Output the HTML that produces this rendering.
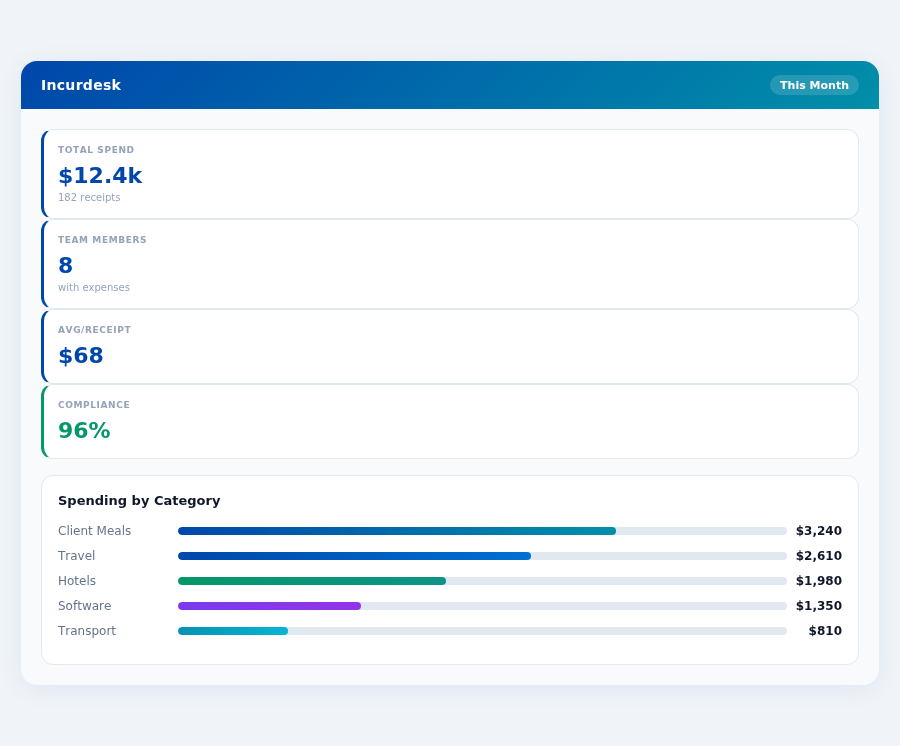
<!DOCTYPE html>
<html lang="en">
<head>
<meta charset="utf-8">
<title>Incurdesk</title>
<style>
*{box-sizing:border-box;margin:0;padding:0}
html,body{width:900px;height:746px;overflow:hidden}
body{background:#f0f4f8;font-family:"DejaVu Sans","Liberation Sans",sans-serif;color:#0f172a;font-kerning:none}
.app{position:absolute;left:21px;top:61px;width:858px;height:624px;background:#f8fafc;border-radius:16px;overflow:hidden;box-shadow:0 4px 24px rgba(0,71,171,0.08);will-change:transform}
.hdr{height:48px;background:linear-gradient(135deg,#0047ab 0%,#008fa9 100%);display:flex;align-items:center;justify-content:space-between;padding:0 20px;color:#fff}
.hdr h1{font-size:14px;font-weight:700;letter-spacing:0.3px}
.pill{font-size:11px;font-weight:700;background:rgba(255,255,255,0.15);border-radius:10px;height:20px;line-height:22px;padding:0 10px;overflow:hidden}
.body{padding:20px}
.stat{background:#fff;border:1px solid #e2e8f0;border-left:3px solid #0047ab;border-radius:12px;padding:14px 14px 0 14px;margin-bottom:0}
.stat.s1{height:90px}
.stat.s2{height:75px}
.stat.g{border-left-color:#059669}
.lab{font-size:9px;font-weight:700;letter-spacing:0.6px;color:#94a3b8;text-transform:uppercase;line-height:12px}
.val{font-size:22px;font-weight:700;color:#0047ab;line-height:28px;margin-top:6px}
.g .val{color:#059669}
.sub{font-size:10px;color:#94a3b8;line-height:12px;margin-top:2px}
.panel{margin-top:16px;background:#fff;border:1px solid #e2e8f0;border-radius:12px;height:190px;padding:17px 16px 16px}
.panel h2{font-size:13px;font-weight:700;line-height:16px;margin-bottom:9px}
.row{display:flex;align-items:center;height:25px;font-size:12px}
.row .n{width:120px;color:#64748b}
.row .t{flex:1;height:8px;border-radius:4px;background:#e2e8f0;overflow:hidden}
.row .t i{display:block;height:8px;border-radius:4px}
.row .v{width:55px;text-align:right;font-weight:700;color:#0f172a}
</style>
</head>
<body>
<div class="app">
  <div class="hdr"><h1>Incurdesk</h1><span class="pill">This Month</span></div>
  <div class="body">
    <div class="stat s1"><div class="lab">Total Spend</div><div class="val">$12.4k</div><div class="sub">182 receipts</div></div>
    <div class="stat s1"><div class="lab">Team Members</div><div class="val">8</div><div class="sub">with expenses</div></div>
    <div class="stat s2"><div class="lab">Avg/Receipt</div><div class="val">$68</div></div>
    <div class="stat s2 g"><div class="lab">Compliance</div><div class="val">96%</div></div>
    <div class="panel">
      <h2>Spending by Category</h2>
      <div class="row"><span class="n">Client Meals</span><span class="t"><i style="width:72%;background:linear-gradient(90deg,#0047ab,#008fa9)"></i></span><span class="v">$3,240</span></div>
      <div class="row"><span class="n">Travel</span><span class="t"><i style="width:58%;background:linear-gradient(90deg,#0047ab,#0070d2)"></i></span><span class="v">$2,610</span></div>
      <div class="row"><span class="n">Hotels</span><span class="t"><i style="width:44%;background:linear-gradient(90deg,#059669,#0d9488)"></i></span><span class="v">$1,980</span></div>
      <div class="row"><span class="n">Software</span><span class="t"><i style="width:30%;background:linear-gradient(90deg,#7c3aed,#9333ea)"></i></span><span class="v">$1,350</span></div>
      <div class="row"><span class="n">Transport</span><span class="t"><i style="width:18%;background:linear-gradient(90deg,#0891b2,#06b6d4)"></i></span><span class="v">$810</span></div>
    </div>
  </div>
</div>
</body>
</html>
